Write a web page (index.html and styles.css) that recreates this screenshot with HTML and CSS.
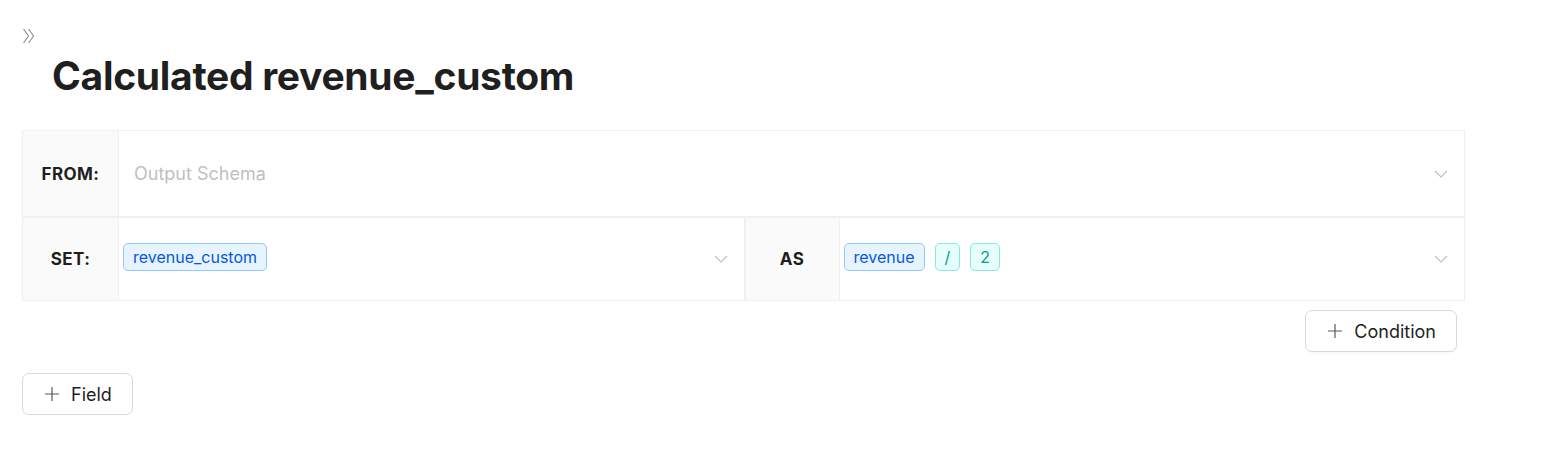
FILE: index.html
```html
<!DOCTYPE html>
<html>
	<head>
		<meta charset="utf-8">
		<title>Calculated revenue_custom</title>
		<link rel="stylesheet" href="styles.css">
	</head>
	<body>
		<div class="page">
			<div class="toggle">
				<svg width="12" height="16" viewBox="0 0 12 16" fill="none" stroke="#8c8c8c" stroke-width="1.1">
					<path d="M0.5 1l5 7-5 7"/>
					<path d="M5.5 1l5 7-5 7"/>
				</svg>
			</div>
			<h1 class="title">Calculated revenue_custom</h1>

			<div class="form">
				<div class="row">
					<div class="label">FROM:</div>
					<div class="select">
						<span class="placeholder">Output Schema</span>
						<svg class="arrow" width="14" height="14" viewBox="0 0 14 14" fill="none" stroke="#bfbfbf" stroke-width="1.1"><path d="M1 4l6 6 6-6"/></svg>
					</div>
				</div>
				<div class="row">
					<div class="label">SET:</div>
					<div class="select">
						<span class="tag blue">revenue_custom</span>
						<svg class="arrow" width="14" height="14" viewBox="0 0 14 14" fill="none" stroke="#bfbfbf" stroke-width="1.1"><path d="M1 4l6 6 6-6"/></svg>
					</div>
					<div class="label">AS</div>
					<div class="select">
						<span class="tag blue">revenue</span>
						<span class="tag cyan">/</span>
						<span class="tag cyan">2</span>
						<svg class="arrow" width="14" height="14" viewBox="0 0 14 14" fill="none" stroke="#bfbfbf" stroke-width="1.1"><path d="M1 4l6 6 6-6"/></svg>
					</div>
				</div>
			</div>

			<div class="actions">
				<button class="btn">
					<svg width="16" height="16" viewBox="0 0 16 16" stroke="#595959" stroke-width="1.2"><path d="M8 1v14M1 8h14"/></svg>
					Condition
				</button>
			</div>
			<button class="btn">
				<svg width="16" height="16" viewBox="0 0 16 16" stroke="#595959" stroke-width="1.2"><path d="M8 1v14M1 8h14"/></svg>
				Field
			</button>
		</div>
	</body>
</html>
```

FILE: styles.css
```css
*{
	margin: 0;
	padding: 0;
	box-sizing: border-box;
}
body{
	font-family: Inter, "Noto Sans", sans-serif;
	color: #1f1f1f;
	background: #fff;
}
.page{
	width: 1465px;
	padding: 28px 0 0 22px;
}
.toggle{
	height: 16px;
	padding-left: 1px;
	line-height: 0;
}
.title{
	margin: 2px 0 0 30px;
	font-size: 39px;
	font-weight: 700;
	letter-spacing: -0.3px;
	line-height: 60px;
	color: #1f1f1f;
}
.form{
	margin-top: 24px;
	border: 1px solid #f0f0f0;
}
.row{
	display: flex;
	height: 85px;
}
.row + .row{
	border-top: 2px solid #f0f0f0;
	height: 84px;
}
.label{
	width: 96px;
	flex: none;
	display: flex;
	align-items: center;
	justify-content: center;
	background: #fafafa;
	font-size: 17px;
	font-weight: 700;
	letter-spacing: 0.4px;
	color: #1f1f1f;
	border-right: 1px solid #f0f0f0;
}
.select{
	flex: 1;
	display: flex;
	align-items: center;
	gap: 10px;
	padding: 0 16px 0 4px;
}
.select + .label{
	border-left: 2px solid #f0f0f0;
}
.placeholder{
	padding-left: 11px;
	font-size: 18px;
	color: #bfbfbf;
	flex: 1;
}
.arrow{
	margin-left: auto;
}
.tag{
	display: inline-block;
	height: 28px;
	line-height: 26px;
	padding: 0 9px;
	margin-bottom: 4px;
	font-size: 16px;
	border-radius: 5px;
	border: 1px solid;
}
.tag.blue{
	background: #e6f4ff;
	border-color: #91caff;
	color: #0958d9;
}
.tag.cyan{
	background: #e6fffb;
	border-color: #87e8de;
	color: #08979c;
}
.actions{
	display: flex;
	justify-content: flex-end;
	padding: 9px 8px 0 0;
}
.btn{
	display: inline-flex;
	align-items: center;
	gap: 11px;
	height: 42px;
	padding: 0 20px 0 21px;
	font-family: Inter, "Noto Sans", sans-serif;
	font-size: 18px;
	color: #1f1f1f;
	background: #fff;
	border: 1px solid #d9d9d9;
	border-radius: 7px;
	box-shadow: 0 2px 0 rgba(0,0,0,0.02);
	cursor: pointer;
}
.page > .btn{
	margin-top: 21px;
}
```
